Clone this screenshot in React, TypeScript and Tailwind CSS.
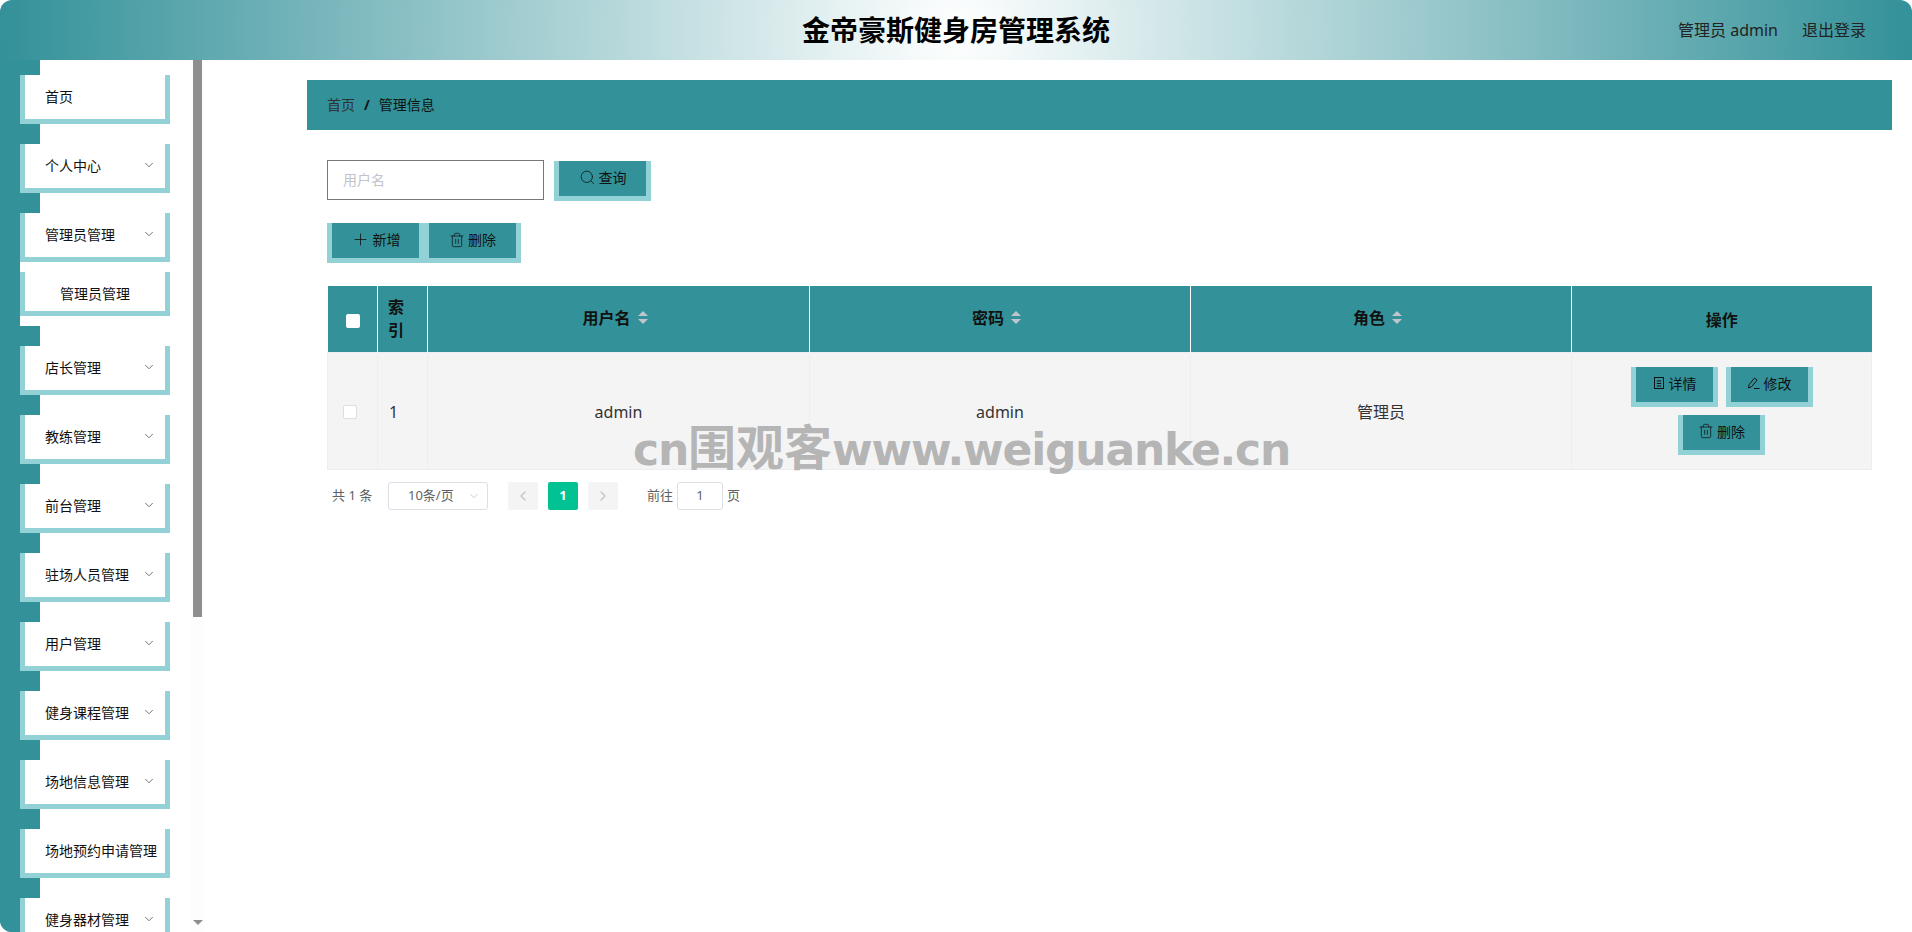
import React from 'react';
import { ChevronDown, ChevronLeft, ChevronRight, Search, Plus, Trash2 } from 'lucide-react';

const topMenus = ['首页', '个人中心', '管理员管理'];
const restMenus = ['店长管理', '教练管理', '前台管理', '驻场人员管理', '用户管理', '健身课程管理', '场地信息管理', '场地预约申请管理', '健身器材管理'];
const noArrow = ['首页', '场地预约申请管理'];

const MenuItem = ({ label, first }: { label: string; first?: boolean }) => (
  <div>
    <div className={`ml-[20px] w-[20px] bg-[#339199] ${first ? 'h-[15px]' : 'h-[20px]'}`}></div>
    <div className="ml-[20px] w-[150px] h-[49px] bg-white border-x-[5px] border-b-[5px] border-[#92d1d6] flex items-center pl-[20px] pr-[8px] pb-[2px] text-[14px] text-[#111] whitespace-nowrap">
      <span className="flex-1">{label}</span>
      {!noArrow.includes(label) && <ChevronDown className="w-[14px] h-[14px] text-[#555] mr-[1px]" strokeWidth={1.4} />}
    </div>
  </div>
);

const DocIcon = () => (
  <svg width="14" height="14" viewBox="0 0 14 14" fill="none" stroke="currentColor" strokeWidth="1">
    <rect x="2.5" y="1.5" width="9" height="11" />
    <path d="M4.8 5h4.4M4.8 7.5h4.4M4.8 10h4.4" />
  </svg>
);

const EditIcon = () => (
  <svg width="14" height="14" viewBox="0 0 14 14" fill="none" stroke="currentColor" strokeWidth="1">
    <path d="M1.5 12l.6-3.4L7.5 2l2.6 2-5.4 6.6z" />
    <path d="M7 12.5h5.5" />
  </svg>
);

const TealButton = ({ icon, label, className = '' }: { icon: React.ReactNode; label: string; className?: string }) => (
  <button className={`w-[87px] h-[40px] pb-[2px] bg-[#339199] border-x-[5px] border-b-[5px] border-[#92d1d6] flex items-center justify-center gap-[3px] text-[14px] text-[#111] ${className}`}>
    {icon}
    <span>{label}</span>
  </button>
);

const SortCaret = () => (
  <span className="inline-flex flex-col items-center gap-[3px] w-[24px] align-middle">
    <span className="w-0 h-0 border-x-[5px] border-x-transparent border-b-[5px] border-b-[#c0c4cc]"></span>
    <span className="w-0 h-0 border-x-[5px] border-x-transparent border-t-[5px] border-t-[#c0c4cc]"></span>
  </span>
);

const SortHead = ({ label }: { label: string }) => (
  <th className="border-l border-white font-bold text-[16px] text-[#111] pb-[2px]">
    <span className="inline-flex items-center justify-center">
      {label}
      <SortCaret />
    </span>
  </th>
);

export default function App() {
  return (
    <div className="relative h-[932px] overflow-hidden flex flex-col bg-white text-[#111] font-['Noto_Sans','Noto_Sans_CJK_SC',sans-serif]">
      <header className="h-[60px] shrink-0 rounded-t-[12px] bg-[radial-gradient(circle,#ffffff,#339199)] flex items-center justify-center relative">
        <h1 className="text-[28px] font-bold text-black leading-none">金帝豪斯健身房管理系统</h1>
        <div className="absolute right-[46px] top-0 h-[60px] flex items-center gap-[24px] text-[16px] text-[#222]">
          <span>管理员 admin</span>
          <span>退出登录</span>
        </div>
      </header>

      <div className="flex flex-1 min-h-0">
        <aside className="w-[204px] shrink-0 flex overflow-hidden rounded-bl-[12px] bg-[#339199]">
          <nav className="w-[190px] shrink-0 h-full overflow-hidden bg-[linear-gradient(to_right,#339199_20px,#ffffff_20px)]">
            {topMenus.map((m, i) => (
              <MenuItem key={m} label={m} first={i === 0} />
            ))}
            <div className="ml-[20px] h-[64px] bg-white rounded-l-[5px] pt-[10px]">
              <div className="w-[150px] h-[44px] pt-[4px] bg-white border-x-[5px] border-b-[5px] border-[#92d1d6] flex items-center justify-center text-[14px] text-[#111]">
                管理员管理
              </div>
            </div>
            {restMenus.map(m => (
              <MenuItem key={m} label={m} />
            ))}
          </nav>
          <div className="w-[14px] shrink-0 h-full bg-[#fdfdfd] flex flex-col items-center pl-[3px] pr-[2px]">
            <div className="w-[9px] h-[557px] bg-[#8e8e8e]"></div>
            <div className="mt-auto mb-[7px] w-0 h-0 border-x-[5px] border-x-transparent border-t-[5px] border-t-[#8e8e8e]"></div>
          </div>
        </aside>

        <main className="flex-1 min-w-0 pl-[103px] pr-[20px] pt-[20px] bg-white">
          <div className="h-[50px] bg-[#339199] flex items-center pl-[20px] pb-[2px] text-[14px]">
            <span className="text-[#303133]">首页</span>
            <span className="mx-[9px] font-bold text-[#111]">/</span>
            <span className="text-[#111]">管理信息</span>
          </div>

          <div className="pl-[20px] pr-[20px]">
            <div className="flex items-start gap-[10px] mt-[30px]">
              <input
                placeholder="用户名"
                className="w-[217px] h-[40px] border border-[#777] bg-white pl-[15px] pb-[2px] text-[14px] outline-none placeholder:text-[#c0c4cc]"
              />
              <TealButton
                className="w-[97px] mt-[1px]"
                icon={<Search className="w-[17px] h-[17px]" strokeWidth={1.1} />}
                label="查询"
              />
            </div>

            <div className="flex mt-[22px]">
              <TealButton className="w-[97px]" icon={<Plus className="w-[19px] h-[19px]" strokeWidth={1} />} label="新增" />
              <TealButton className="w-[97px]" icon={<Trash2 className="w-[16px] h-[16px]" strokeWidth={1.1} />} label="删除" />
            </div>

            <table className="w-[1544px] mt-[23px] table-fixed border-collapse text-[16px]">
              <colgroup>
                <col className="w-[50px]" />
                <col className="w-[50px]" />
                <col className="w-[382px]" />
                <col className="w-[381px]" />
                <col className="w-[381px]" />
                <col className="w-[300px]" />
              </colgroup>
              <thead>
                <tr className="h-[66px] bg-[#339199]">
                  <th>
                    <span className="block w-[14px] h-[14px] bg-white rounded-[2px] ml-[18px] mt-[4px]"></span>
                  </th>
                  <th className="border-l border-white text-left pl-[10px] font-bold leading-[23px] text-[#111]">索<br />引</th>
                  <SortHead label="用户名" />
                  <SortHead label="密码" />
                  <SortHead label="角色" />
                  <th className="border-l border-white font-bold text-[#111]"><span className="block mt-[3px]">操作</span></th>
                </tr>
              </thead>
              <tbody>
                <tr className="bg-[#f4f4f5] text-[#333] text-center">
                  <td className="border border-[#ebeef5] pt-[2px]">
                    <span className="block w-[14px] h-[14px] bg-white border border-[#dcdfe6] rounded-[2px] ml-[15px]"></span>
                  </td>
                  <td className="border border-[#ebeef5] pt-[2px] text-left pl-[11px]">1</td>
                  <td className="border border-[#ebeef5] pt-[2px]">admin</td>
                  <td className="border border-[#ebeef5] pt-[2px]">admin</td>
                  <td className="border border-[#ebeef5] pt-[2px]">管理员</td>
                  <td className="border border-[#ebeef5] pt-[14px] pb-[14px]">
                    <div className="flex flex-wrap justify-center gap-[8px] px-[40px]">
                      <TealButton icon={<DocIcon />} label="详情" />
                      <TealButton icon={<EditIcon />} label="修改" />
                      <TealButton icon={<Trash2 className="w-[16px] h-[16px]" strokeWidth={1.1} />} label="删除" />
                    </div>
                  </td>
                </tr>
              </tbody>
            </table>

            <div className="flex items-center h-[28px] mt-[12px] pl-[5px] text-[13px] text-[#606266]">
              <span className="w-[56px]">共 1 条</span>
              <div className="w-[100px] h-[28px] border border-[#dcdfe6] rounded-[3px] flex items-center pl-[19px] pr-[6px]">
                <span className="flex-1">10条/页</span>
                <ChevronDown className="w-[14px] h-[14px] text-[#c0c4cc]" strokeWidth={1.4} />
              </div>
              <div className="w-[30px] h-[28px] ml-[20px] bg-[#f4f4f5] rounded-[2px] flex items-center justify-center text-[#c0c4cc]">
                <ChevronLeft className="w-[16px] h-[16px]" strokeWidth={2} />
              </div>
              <div className="w-[30px] h-[28px] ml-[10px] bg-[#00c292] rounded-[2px] flex items-center justify-center text-white font-bold">1</div>
              <div className="w-[30px] h-[28px] ml-[10px] bg-[#f4f4f5] rounded-[2px] flex items-center justify-center text-[#c0c4cc]">
                <ChevronRight className="w-[16px] h-[16px]" strokeWidth={2} />
              </div>
              <span className="ml-[29px]">前往</span>
              <div className="w-[46px] h-[28px] ml-[4px] border border-[#dcdfe6] rounded-[3px] flex items-center justify-center">1</div>
              <span className="ml-[4px]">页</span>
            </div>
          </div>
        </main>
      </div>

      <div className="absolute left-[633px] top-[418px] pointer-events-none whitespace-nowrap text-[#b5b5b5] font-bold text-[44px] leading-[60px] tracking-[-1.2px] font-['DejaVu_Sans','Noto_Sans_CJK_SC',sans-serif]">
        cn<span className="text-[48px] tracking-[0px]">围观客</span>www.weiguanke.cn
      </div>
    </div>
  );
}
